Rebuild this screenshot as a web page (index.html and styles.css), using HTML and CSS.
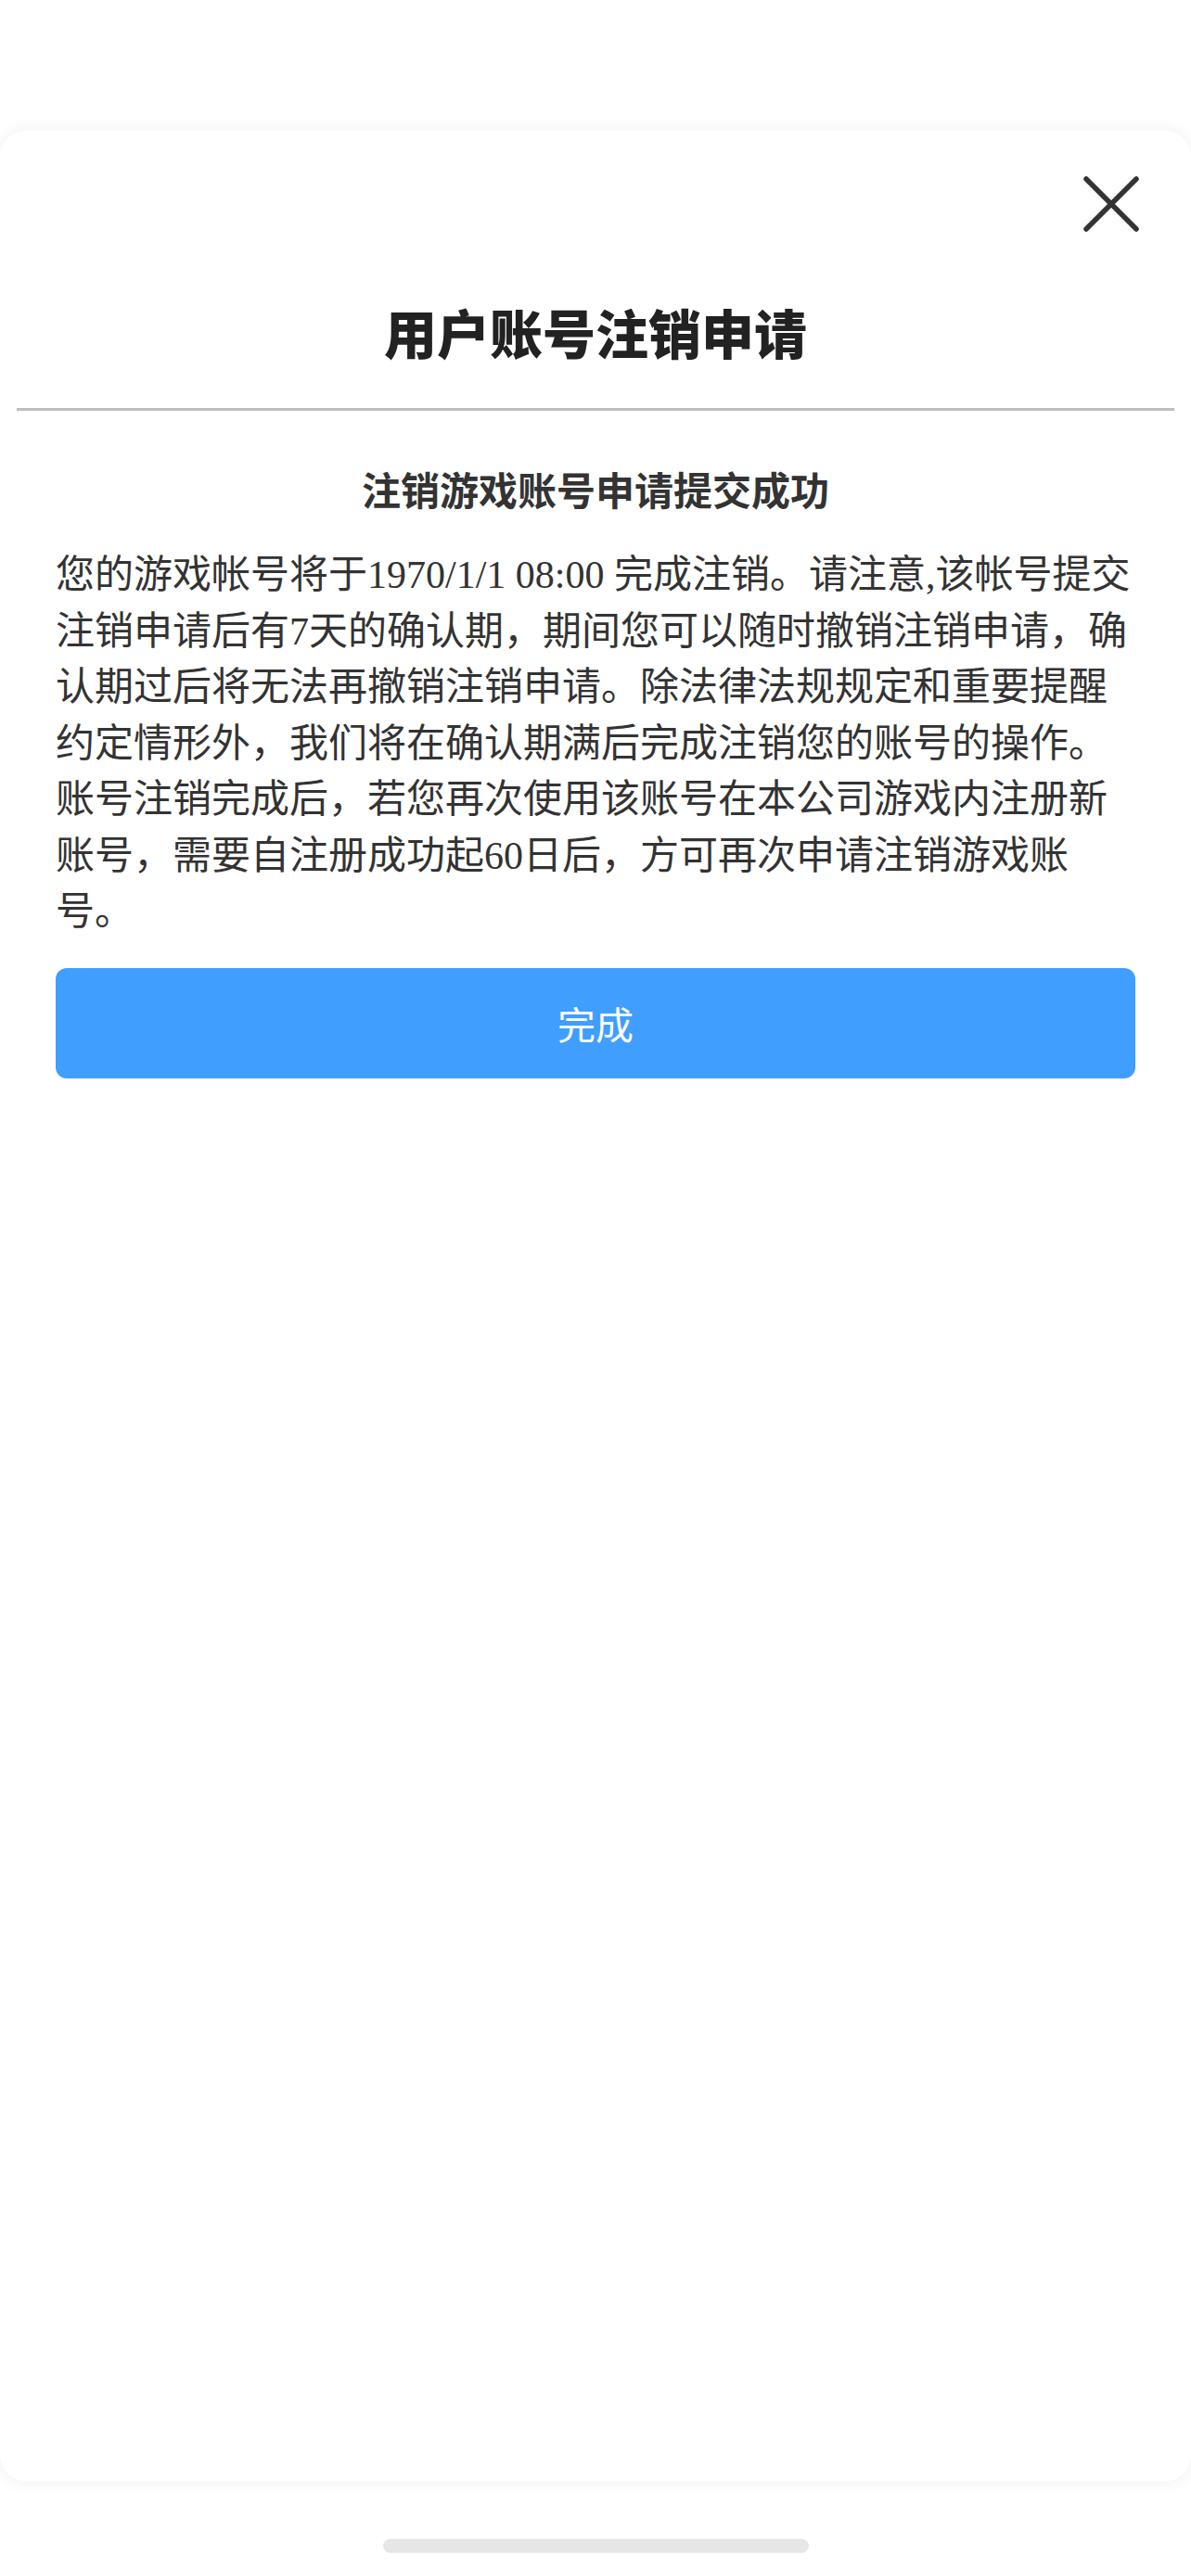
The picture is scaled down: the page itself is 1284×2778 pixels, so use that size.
FILE: index.html
```html
<!DOCTYPE html>
<html lang="zh-CN">
<head>
<meta charset="utf-8">
<title>用户账号注销申请</title>
<link rel="stylesheet" href="styles.css">
</head>
<body>
<div class="page">
  <div class="top-space"></div>
  <div class="card">
    <div class="card-head">
      <button class="close" aria-label="关闭">
        <svg viewBox="0 0 60 60" width="60" height="60">
          <path d="M3 3 L57 57 M57 3 L3 57" stroke="#333" stroke-width="5.5" stroke-linecap="round" fill="none"/>
        </svg>
      </button>
    </div>
    <h1 class="title">用户账号注销申请</h1>
    <div class="divider"></div>
    <h2 class="subtitle">注销游戏账号申请提交成功</h2>
    <p class="body-text">您的游戏帐号将于1970/1/1 08:00 完成注销。请注意,该帐号提交注销申请后有7天的确认期，期间您可以随时撤销注销申请，确认期过后将无法再撤销注销申请。除法律法规规定和重要提醒约定情形外，我们将在确认期满后完成注销您的账号的操作。账号注销完成后，若您再次使用该账号在本公司游戏内注册新账号，需要自注册成功起60日后，方可再次申请注销游戏账号。</p>
    <div class="actions">
      <button class="done">完成</button>
    </div>
  </div>
  <div class="home-bar"><span class="home-indicator"></span></div>
</div>
</body>
</html>
```
FILE: styles.css
```css
html, body {
  margin: 0;
  padding: 0;
  background: #ffffff;
}
body {
  font-family: "Liberation Serif", "Noto Sans CJK SC", serif;
  color: #333;
}
.page {
  width: 1284px;
  height: 2778px;
  display: flex;
  flex-direction: column;
}
.top-space {
  height: 141px;
  flex: none;
}
.card {
  height: 2535px;
  flex: none;
  background: #fff;
  border-radius: 28px;
  box-shadow: 0 0 18px rgba(0, 0, 0, 0.07);
  display: flex;
  flex-direction: column;
}
.card-head {
  display: flex;
  justify-content: flex-end;
  padding: 48px 54px 0 0;
}
.close {
  width: 64px;
  height: 62px;
  padding: 2px;
  border: 0;
  background: none;
  display: flex;
  align-items: center;
  justify-content: center;
}
.close svg {
  display: block;
}
.title {
  margin: 78px 0 0;
  text-align: center;
  font-size: 57px;
  line-height: 67px;
  font-weight: 900;
  color: #222;
}
.divider {
  margin: 44px 18px 0;
  height: 3px;
  background: #bdbdbd;
}
.subtitle {
  margin: 63px 0 0;
  text-align: center;
  font-size: 42px;
  line-height: 50px;
  font-weight: 700;
  color: #333;
}
.body-text {
  margin: 34px 0 0;
  padding: 0 60px;
  font-size: 42px;
  line-height: 60.5px;
  color: #333;
}
.actions {
  padding: 30px 60px 0;
}
.done {
  width: 100%;
  height: 119px;
  border: 0;
  border-radius: 12px;
  background: #409eff;
  color: #fff;
  font-family: "Liberation Serif", "Noto Sans CJK SC", serif;
  font-size: 41px;
  display: block;
}
.home-bar {
  flex: none;
  display: flex;
  justify-content: center;
  padding-top: 62px;
}
.home-indicator {
  width: 459px;
  height: 15px;
  border-radius: 8px;
  background: #e6e6e6;
}
```
